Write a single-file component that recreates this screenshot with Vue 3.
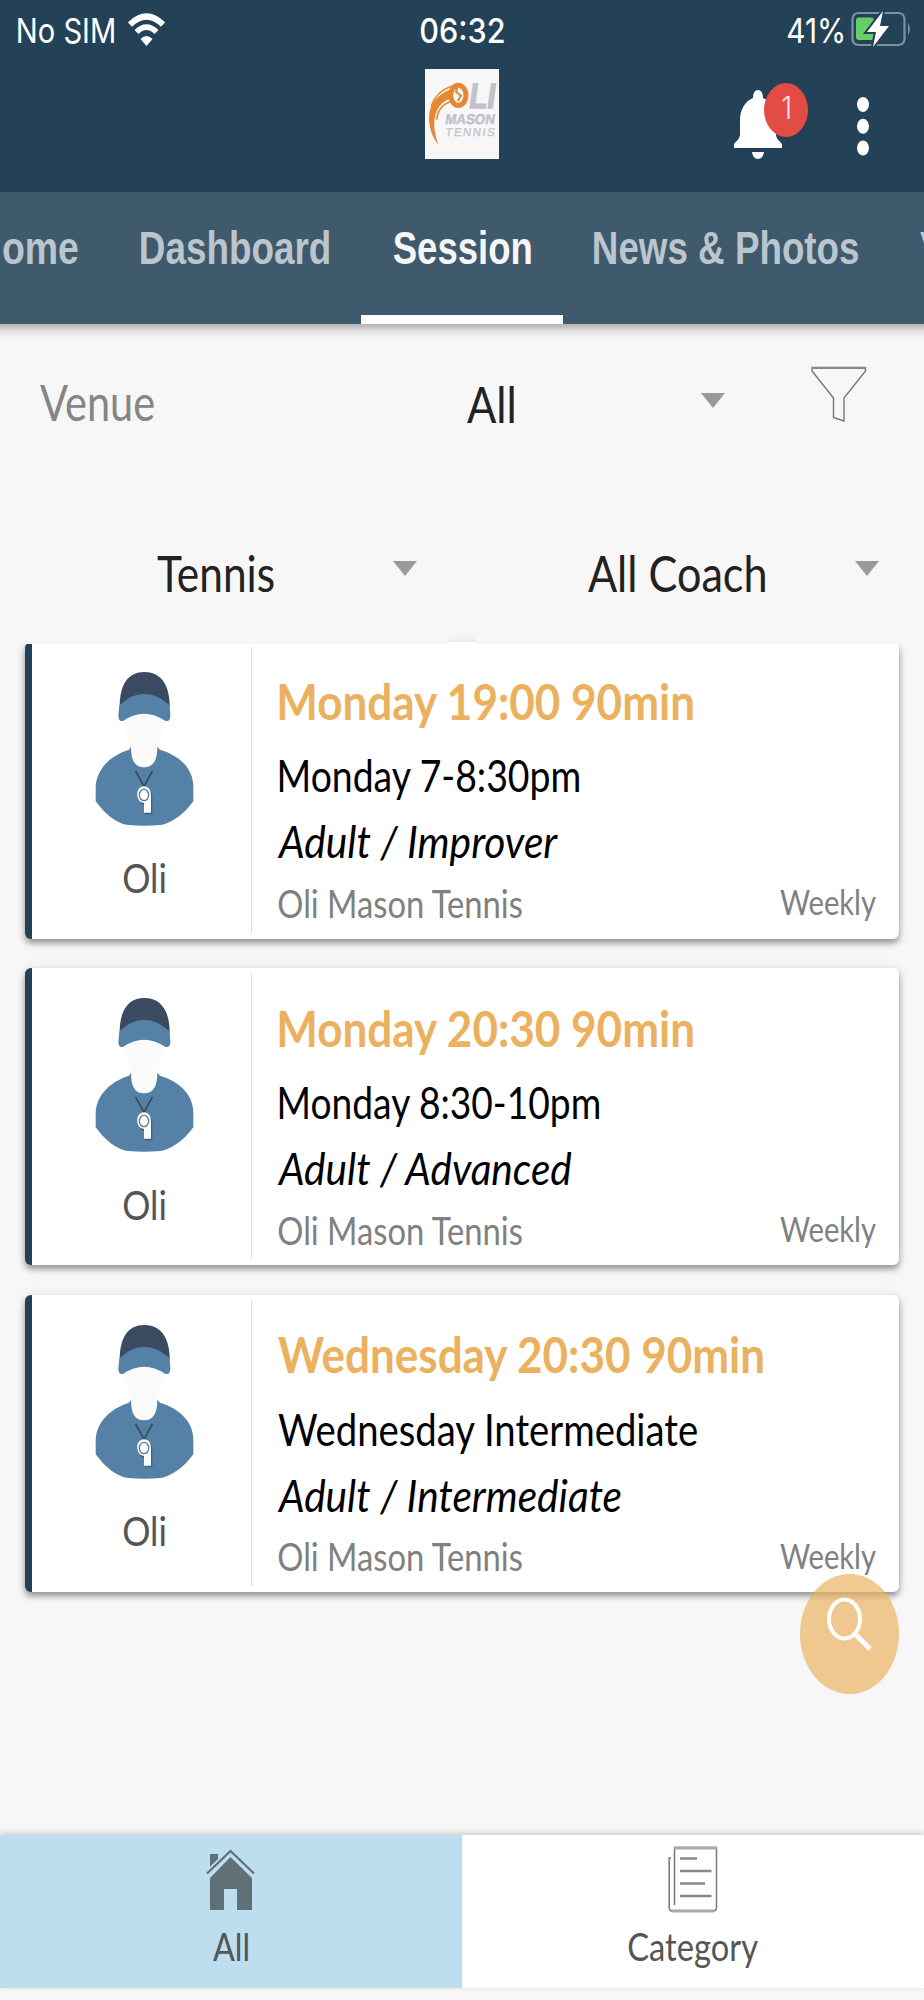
<script setup>
const tabs = [
  { label: 'Home', width: 102 },
  { label: 'Dashboard', width: 189 },
  { label: 'Session', width: 138, active: true },
  { label: 'News & Photos', width: 265 },
  { label: 'V', width: 28 },
]

const sessions = [
  { title: 'Monday 19:00 90min', tw: 416, name: 'Monday 7-8:30pm', nw: 302, level: 'Adult / Improver', lw: 280 },
  { title: 'Monday 20:30 90min', tw: 416, name: 'Monday 8:30-10pm', nw: 322, level: 'Adult / Advanced', lw: 295 },
  { title: 'Wednesday 20:30 90min', tw: 486, name: 'Wednesday Intermediate', nw: 420, level: 'Adult / Intermediate', lw: 343 },
]

const ctx = document.createElement('canvas').getContext('2d')
const vFit = {
  mounted(el, { value }) {
    const cs = getComputedStyle(el)
    ctx.font = `${cs.fontStyle} ${cs.fontWeight} ${parseFloat(cs.fontSize) * 10}px ${cs.fontFamily}`
    const m = ctx.measureText(el.textContent.trim())
    const left = (m.actualBoundingBoxLeft / 10) * 0.5
    const ink = left + m.actualBoundingBoxRight / 10
    const k = value / ink
    const natural = el.getBoundingClientRect().width
    el.style.transformOrigin = '0 0'
    el.style.transform = `translateX(${left * k}px) scaleX(${k})`
    el.style.marginRight = `${value - natural}px`
  },
}
</script>

<template>
  <div class="screen">
    <header class="top">
      <div class="status">
        <div class="carrier">
          <span v-fit="97" class="t">No SIM</span>
          <svg class="wifi" width="37" height="34" viewBox="0 0 37 34">
            <g fill="none" stroke="#fff">
              <path d="M2 11.5 Q18.5 -4.5 35 11.5" stroke-width="6" />
              <path d="M8.5 19 Q18.5 9 28.500 19" stroke-width="5.500" />
            </g>
            <path d="M12.500 26 Q18.500 20 24.500 26 L18.500 33Z" fill="#fff" />
          </svg>
        </div>
        <span v-fit="84" class="t clock">06:32</span>
        <div class="power">
          <span v-fit="56" class="t">41%</span>
          <svg width="60" height="36" viewBox="0 0 60 36">
            <rect x="1.500" y="2" width="52" height="32" rx="6" fill="none" stroke="#7f919e" stroke-width="2.200" />
            <path d="M57 12 Q61 18 57 24Z" fill="#7f919e" />
            <rect x="5" y="6.500" width="18" height="22.500" rx="3" fill="#68ce67" />
            <path d="M32 0 L16 21 H25 L22 36 L38 15 H29Z" fill="#fff" stroke="#234258" stroke-width="4" paint-order="stroke" />
          </svg>
        </div>
      </div>
      <div class="toolbar">
        <div class="logo">
          <svg width="74" height="90" viewBox="0 0 222 270">
            <g fill="none" stroke="#e88733">
              <path d="M80 60 C34 76 12 110 12 147 C12 180 25 210 41 228 C30 200 25 172 29 148 C34 116 52 96 80 86Z" fill="#e88733" stroke="none" />
              <path d="M18 112 C28 82 50 62 80 51" stroke-width="4" />
              <path d="M35 152 C38 122 54 104 82 96" stroke-width="5" />
              <ellipse cx="100" cy="79" rx="23" ry="30" stroke-width="15" fill="#f7f7f7" />
              <path d="M99 50 L93 68 L108 80 L98 96" stroke-width="6" />
            </g>
            <g font-family="Liberation Sans, sans-serif" font-weight="bold" fill="#c2c1cb" stroke="#c2c1cb">
              <text transform="translate(129 118) skewX(-8)" font-size="106" textLength="79" lengthAdjust="spacingAndGlyphs" stroke-width="4">LI</text>
              <text transform="translate(59 165) skewX(-8)" font-size="43" textLength="149" lengthAdjust="spacingAndGlyphs" stroke-width="1.500">MASON</text>
              <text transform="translate(60 200) skewX(-8)" font-size="34" textLength="148" lengthAdjust="spacing" font-weight="400" fill="#c6c6cd" stroke-width="1">TENNIS</text>
            </g>
          </svg>
        </div>
        <div class="actions">
          <div class="bell">
            <svg width="49" height="69" viewBox="0 0 49 69">
              <path d="M24 0 C27 0 29 3 29 8 C38 11 42 20 42 30 V44 C42 49 45 50 48 54 V58 H0 V54 C3 50 6 49 6 44 V30 C6 20 11 11 19 8 C19 3 21 0 24 0Z M18 62 H30 Q29 69 24 69 T18 62Z" fill="#fff" />
            </svg>
            <span class="badge"><span v-fit="8" class="one">1</span></span>
          </div>
          <svg width="12" height="59" viewBox="0 0 12 59" fill="#fff">
            <ellipse cx="6" cy="7.500" rx="6" ry="7.500" />
            <ellipse cx="6" cy="29.300" rx="6" ry="7.500" />
            <ellipse cx="6" cy="51" rx="6" ry="7.500" />
          </svg>
        </div>
      </div>
    </header>

    <nav class="tabs">
      <div v-for="t in tabs" :key="t.label" class="tab" :class="{ active: t.active }">
        <span v-fit="t.width" class="t">{{ t.label }}</span>
      </div>
    </nav>

    <section class="filters">
      <div class="venue">
        <span v-fit="114" class="t label">Venue</span>
        <span v-fit="47" class="t all">All</span>
        <i class="caret"></i>
        <svg class="funnel" width="56" height="58" viewBox="0 0 56 58">
          <path d="M1 1.500 H54.500 V5 L33 32 V55 L22.500 51.500 V32 L1 5Z" fill="none" stroke="#777" stroke-width="1.400" />
          <path d="M1 2 H55" stroke="#888" stroke-width="2" />
        </svg>
      </div>
      <div class="selects">
        <div class="select sport">
          <span v-fit="117" class="t">Tennis</span>
          <i class="caret"></i>
        </div>
        <div class="select trainer">
          <span v-fit="177" class="t">All Coach</span>
          <i class="caret"></i>
        </div>
      </div>
    </section>

    <main class="list">
      <article v-for="s in sessions" :key="s.title" class="card">
        <div class="coach">
          <svg width="98.700" height="155" viewBox="45 31 296 465">
            <path d="M133 150 H251 Q249 215 232 258 C240 345 145 345 153 258 Q135 215 133 150Z" fill="#fbfbfb" />
            <path d="M153 258 C153 300 165 320 192 320 S232 300 232 258 L240 267 C300 285 340 325 340 378 V422 C310 465 265 492 240 493 Q192 497 145 493 C110 490 75 460 47 422 V378 C50 325 90 285 147 267Z" fill="#5581a6" />
            <path d="M119 138 C119 70 145 34 193 34 S269 70 269 138Z" fill="#3a4a60" />
            <path d="M118 134 Q192 64 269 134 L271 165 Q270 186 255 180 Q192 138 130 180 Q116 186 115 165Z" fill="#5581a6" />
            <path d="M167 331 L192 377 L217 331" fill="none" stroke="#3a4a60" stroke-width="5" />
            <path d="M194 379 C170 374 165 425 192 430 V458 H215 V405 Q213 380 194 379Z" fill="#3f607e" transform="translate(2 3)" />
            <path d="M192 377 C165 377 165 425 192 427 V456 H213 V404 Q213 378 192 377Z" fill="#fff" />
            <ellipse cx="192" cy="403" rx="14" ry="17" fill="#fff" stroke="#5581a6" stroke-width="4" />
          </svg>
          <span v-fit="42" class="t who">Oli</span>
        </div>
        <div class="body">
          <div class="line title"><span v-fit="s.tw" class="t">{{ s.title }}</span></div>
          <div class="line name"><span v-fit="s.nw" class="t">{{ s.name }}</span></div>
          <div class="line level"><span v-fit="s.lw" class="t">{{ s.level }}</span></div>
          <div class="foot">
            <span v-fit="245" class="t club">Oli Mason Tennis</span>
            <span v-fit="96" class="t freq">Weekly</span>
          </div>
        </div>
      </article>
    </main>

    <button class="fab">
      <svg width="46" height="56" viewBox="0 0 46 56" fill="none" stroke="#fff">
        <ellipse cx="17.500" cy="22" rx="15.500" ry="19.500" stroke-width="4" />
        <path d="M28 37 L43 52" stroke-width="5" />
      </svg>
    </button>

    <footer class="bottom">
      <div class="item on">
        <svg class="house" width="49" height="61" viewBox="0 0 49 61">
          <path d="M4 5 H12 V14 L4 23Z M24.500 8 L46 29 V61 H31 V40 H18 V61 H4 V29Z" fill="#5f7076" />
          <path d="M1 25 L24.500 2 L48 25" fill="none" stroke="#bcdeee" stroke-width="6" />
          <path d="M1 24.500 L24.500 2 L48 24.500" fill="none" stroke="#5f7076" stroke-width="2.200" />
        </svg>
        <span v-fit="35" class="t">All</span>
      </div>
      <div class="item">
        <svg class="doc" width="50" height="68" viewBox="0 0 50 68" fill="none">
          <path d="M6.500 60 V2.500 H48.500 V62 Q48.500 66 45 66 H4 Q1.200 66 1.200 62 V13 H3" stroke="#777" stroke-width="1.500" />
          <path d="M6 3 H49 M4 66 H46" stroke="#aaa" stroke-width="3" />
          <path d="M12 13.500 H29 M12 26 H43.500 M12 38.500 H37 M12 51 H43.500" stroke="#888" stroke-width="2.500" />
        </svg>
        <span v-fit="130" class="t">Category</span>
      </div>
    </footer>
  </div>
</template>

<style>
body { margin: 0; background: #f7f7f7; }
</style>

<style scoped>
.screen {
  position: relative;
  display: flex;
  flex-direction: column;
  width: 924px;
  height: 2000px;
  overflow: hidden;
  background: #f7f7f7;
  font-family: Lato, "Liberation Sans", sans-serif;
}
.t { display: inline-block; white-space: pre; flex: none; }

.top { height: 192px; background: #234258; color: #fff; flex: none; }
.status {
  display: grid;
  grid-template-columns: 1fr auto 1fr;
  height: 60px;
  font: 400 34.5px/62px Inter, "Liberation Sans", sans-serif;
}
.carrier { display: flex; align-items: flex-start; gap: 14px; padding-left: 17px; }
.wifi { margin-top: 13px; }
.clock { font-weight: 500; }
.power { display: flex; justify-content: flex-end; gap: 8px; padding-right: 13px; }
.power svg { margin-top: 11px; }
.toolbar { display: grid; grid-template-columns: 1fr 74px 1fr; padding-top: 9px; }
.logo { grid-column: 2; height: 90px; background: #f7f7f7; }
.logo svg { display: block; overflow: visible; }
.actions { display: flex; justify-content: flex-end; gap: 74px; padding: 21px 55.5px 0 0; }
.actions > svg { margin-top: 6.5px; }
.bell { position: relative; width: 49px; height: 69px; }
.bell svg { display: block; }
.badge {
  position: absolute;
  left: 30px;
  top: -7.5px;
  width: 44px;
  height: 54px;
  border-radius: 50%;
  background: #e24c45;
  display: flex;
  justify-content: center;
}
.one { display: inline-block; font: 300 31px/50px Inter, sans-serif; color: #fbe6e5; }

.tabs {
  position: relative;
  z-index: 3;
  flex: none;
  display: flex;
  height: 131.5px;
  box-sizing: border-box;
  margin-left: -54px;
  width: 1030px;
  background: #3e5a6c;
  box-shadow: 0 3px 12px rgba(0, 0, 0, .4);
  clip-path: inset(0 0 -24px 0);
  font: 700 45.5px/113px "Liberation Sans", Arial, sans-serif;
  color: #bbc5cd;
}
.tab { height: 131.5px; box-sizing: border-box; padding: 0 31px; flex: none; }
.tab:first-child { padding-left: 30px; }
.tab.active { padding: 0 32px; margin-left: 1px; margin-right: -1px; color: #f6f6f6; border-bottom: 9px solid #fff; }

.filters { position: relative; z-index: 2; height: 320.5px; flex: none; font-size: 50px; color: #222; }
.venue { display: flex; height: 168px; align-items: flex-start; line-height: 60px; padding-left: 40px; }
.label { margin-top: 48px; color: #858585; }
.all { margin: 50.500px 0 0 313px; }
.caret {
  width: 0;
  height: 0;
  border: 12px solid transparent;
  border-top: 15px solid #999;
  border-bottom: 0;
  flex: none;
}
.venue .caret { margin: 69.5px 86px 0 187px; }
.funnel { margin-top: 42px; }
.selects { display: grid; grid-template-columns: 449px 449px; justify-content: space-between; height: 152.5px; }
.select { background: #f7f7f7; display: flex; align-items: flex-start; line-height: 60px; box-sizing: border-box; padding-top: 51px; }
.select .caret { margin-top: 18.500px; }
.sport { padding-left: 157px; }
.sport .caret { margin-left: 119px; }
.trainer { padding-left: 113px; }
.trainer .caret { margin-left: 90px; }

.list {
  position: relative;
  z-index: 1;
  display: grid;
  gap: 29.6px;
  margin: -2.5px 25px 0;
}
.card {
  display: flex;
  height: 297px;
  box-sizing: border-box;
  border-left: 7px solid #234258;
  border-radius: 6px;
  background: #fff;
  box-shadow: 0 4px 6px rgba(0, 0, 0, .38), 0 1px 14px rgba(0, 0, 0, .08);
}
.coach {
  width: 220px;
  box-sizing: border-box;
  height: 286px;
  margin-top: 5px;
  padding: 24px 0 0 5.5px;
  display: flex;
  flex-direction: column;
  align-items: center;
  border-right: 1px solid #dedede;
  flex: none;
}
.coach svg { display: block; flex: none; }
.who { font-size: 40px; line-height: 48px; margin-top: 28.500px; color: #555; }
.body { flex: 1; padding: 29.6px 23px 0 26px; color: #000; }
.line { display: flex; }
.title { font-size: 50px; line-height: 60px; font-weight: 700; color: #ebb15e; }
.name { font-size: 44px; line-height: 52px; margin-top: 18.4px; }
.level { font-size: 44px; line-height: 52px; margin-top: 14px; font-style: italic; }
.foot { display: flex; justify-content: space-between; margin-top: 12.8px; line-height: 46px; color: #808080; }
.club { font-size: 38px; }
.freq { font-size: 35px; margin-top: -1.8px; }

.fab {
  position: absolute;
  z-index: 4;
  left: 800px;
  top: 1574px;
  width: 99px;
  height: 120px;
  padding: 23px 0 0 27px;
  border: 0;
  border-radius: 50%;
  background: rgba(235, 177, 94, .68);
  display: flex;
  align-items: flex-start;
}

.bottom {
  margin-top: auto;
  margin-bottom: 12px;
  height: 153px;
  flex: none;
  display: grid;
  grid-template-columns: 1fr 1fr;
  box-shadow: 0 -2px 6px rgba(0, 0, 0, .18);
  font-size: 38.5px;
  line-height: 46px;
  color: #555;
}
.item { background: #fff; display: flex; flex-direction: column; align-items: center; height: 153px; }
.item.on { background: #bcdeee; box-sizing: border-box; padding-right: 2px; }
.house { margin-top: 14px; margin-bottom: 13.400px; flex: none; }
.doc { margin-top: 10px; margin-bottom: 10.400px; flex: none; }
</style>
